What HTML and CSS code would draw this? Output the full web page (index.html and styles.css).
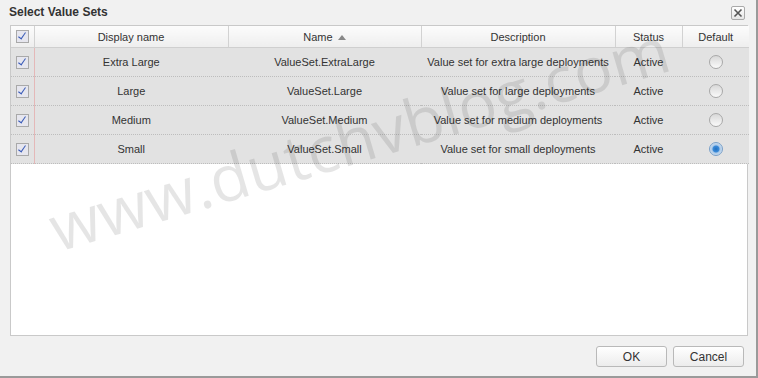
FILE: index.html
```html
<!DOCTYPE html>
<html lang="en">
<head>
    <meta charset="UTF-8">
    <title>Select Value Sets</title>
    <link rel="stylesheet" href="styles.css">
</head>
<body>
    <div class="dialog">
        <div class="titlebar">
            <span class="title">Select Value Sets</span>
            <span class="close">
                <svg width="10" height="10" viewBox="0 0 10 10"><path d="M1.5 1.5 L8.5 8.5 M8.5 1.5 L1.5 8.5" stroke="#555" stroke-width="1.6"/></svg>
            </span>
        </div>
        <div class="grid">
            <table>
                <colgroup>
                    <col style="width: 23px">
                    <col style="width: 194px">
                    <col style="width: 193px">
                    <col style="width: 194px">
                    <col style="width: 67px">
                    <col style="width: 67px">
                </colgroup>
                <thead>
                    <tr>
                        <th class="chk"><span class="cb"></span></th>
                        <th>Display name</th>
                        <th class="sorted">Name <span class="arrow"></span></th>
                        <th>Description</th>
                        <th>Status</th>
                        <th>Default</th>
                    </tr>
                </thead>
                <tbody>
                    <tr>
                        <td class="chk"><span class="cb"></span></td>
                        <td>Extra Large</td>
                        <td>ValueSet.ExtraLarge</td>
                        <td>Value set for extra large deployments</td>
                        <td>Active</td>
                        <td><span class="radio"></span></td>
                    </tr>
                    <tr>
                        <td class="chk"><span class="cb"></span></td>
                        <td>Large</td>
                        <td>ValueSet.Large</td>
                        <td>Value set for large deployments</td>
                        <td>Active</td>
                        <td><span class="radio"></span></td>
                    </tr>
                    <tr>
                        <td class="chk"><span class="cb"></span></td>
                        <td>Medium</td>
                        <td>ValueSet.Medium</td>
                        <td>Value set for medium deployments</td>
                        <td>Active</td>
                        <td><span class="radio"></span></td>
                    </tr>
                    <tr>
                        <td class="chk"><span class="cb"></span></td>
                        <td>Small</td>
                        <td>ValueSet.Small</td>
                        <td>Value set for small deployments</td>
                        <td>Active</td>
                        <td><span class="radio on"></span></td>
                    </tr>
                </tbody>
            </table>
        </div>
        <div class="buttons">
            <button class="btn ok">OK</button>
            <button class="btn">Cancel</button>
        </div>
        <div class="watermark">www.dutchvblog.com</div>
    </div>
</body>
</html>
```

FILE: styles.css
```css
body {
    margin: 0;
    background-color: #f1f1f1;
    font-family: "Liberation Sans", Arial, sans-serif;
}
.dialog {
    position: relative;
    width: 758px;
    height: 378px;
    box-sizing: border-box;
    border-right: 2px solid #9a9a9a;
    border-bottom: 2px solid #9a9a9a;
    background-color: #f1f1f1;
    padding: 0 8px 0 10px;
    overflow: hidden;
}
.titlebar {
    display: flex;
    justify-content: space-between;
    align-items: center;
    height: 25px;
    margin-left: -1px;
}
.title {
    font-size: 12px;
    font-weight: bold;
    color: #333;
    margin-top: -2px;
}
.close {
    display: flex;
    align-items: center;
    justify-content: center;
    width: 12px;
    height: 12px;
    border: 1px solid #aaa;
    background: linear-gradient(#fff, #e6e6e6);
    border-radius: 2px;
    margin-right: 3px;
}
.grid {
    width: 738px;
    height: 311px;
    background-color: #fff;
    border: 1px solid #c9c9c9;
    box-sizing: border-box;
}
table {
    table-layout: fixed;
    width: 736px;
    border-collapse: collapse;
    font-size: 11px;
    color: #333;
}
th {
    height: 21px;
    font-weight: normal;
    background: linear-gradient(#fcfcfc, #eeeeee);
    border-right: 1px solid #d2d2d2;
    border-bottom: 1px solid #cfcfcf;
    padding: 0;
    text-align: center;
}
th:last-child {
    border-right: none;
}
td {
    height: 28px;
    padding: 0;
    text-align: center;
    background-color: #e2e2e2;
    border-bottom: 1px dotted #bdbdbd;
}
td.chk {
    border-right: 1px solid #e4b8b8;
}
.cb {
    display: inline-block;
    width: 11px;
    height: 11px;
    border: 1px solid #a9a9a9;
    background: #e6e6ee;
    vertical-align: middle;
    position: relative;
}
.cb::after {
    content: "";
    position: absolute;
    left: 3px;
    top: 0;
    width: 3px;
    height: 7px;
    border-right: 1.5px solid #3a5bb8;
    border-bottom: 1.5px solid #3a5bb8;
    transform: rotate(35deg);
}
.arrow {
    display: inline-block;
    width: 0;
    height: 0;
    border-left: 4px solid transparent;
    border-right: 4px solid transparent;
    border-bottom: 5px solid #888;
    vertical-align: 1px;
    margin-left: 2px;
}
.radio {
    display: inline-block;
    width: 12px;
    height: 12px;
    border-radius: 50%;
    border: 1px solid #a8a8a8;
    background: linear-gradient(#d8d8d8, #fafafa);
    vertical-align: middle;
}
.radio.on {
    border-color: #7aa0c8;
    background: radial-gradient(circle, #1f6fc0 0, #3a8ad8 3px, #a9c8e8 4px, #c9dcef 6px);
}
.buttons {
    display: flex;
    justify-content: flex-end;
    gap: 6px;
    margin-top: 10px;
    padding-right: 4px;
}
.btn {
    width: 71px;
    height: 21px;
    font-family: "Liberation Sans", Arial, sans-serif;
    font-size: 12px;
    color: #333;
    border: 1px solid #b9b9b9;
    border-radius: 3px;
    background: linear-gradient(#ffffff, #ececec);
    padding: 0;
}
.watermark {
    position: absolute;
    left: 60px;
    top: 196px;
    font-family: "Open Sans", sans-serif;
    font-size: 64px;
    line-height: 1;
    color: rgba(0, 0, 0, 0.1);
    transform: rotate(-16.5deg);
    transform-origin: left bottom;
    white-space: nowrap;
    pointer-events: none;
}
```
